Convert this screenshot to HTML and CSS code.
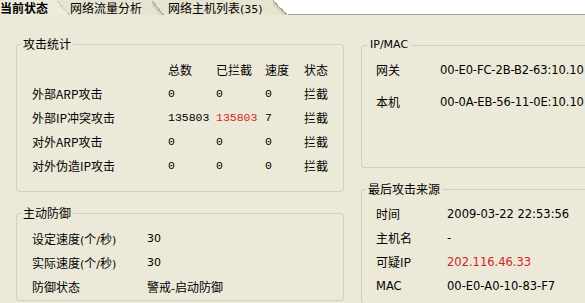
FILE: index.html
```html
<!DOCTYPE html>
<html lang="zh-CN">
<head>
<meta charset="utf-8">
<title>当前状态</title>
<link rel="stylesheet" href="styles.css">
</head>
<body>
<div class="tabs">
  <div class="tab tab-active t1"><span class="tab-label">当前状态</span><span class="tab-corner"></span></div>
  <div class="tab t2"><span class="tab-label">网络流量分析</span><span class="tab-corner"></span></div>
  <div class="tab t3"><span class="tab-label">网络主机列表<span class="lat">(35)</span></span><span class="tab-corner"></span></div>
  <div class="tab-fill"></div>
</div>
<div class="panel">
  <div class="col col-left">
    <fieldset class="group g-stats">
      <legend>攻击统计</legend>
      <div class="stats">
        <span></span><span>总数</span><span>已拦截</span><span>速度</span><span>状态</span>
        <span>外部ARP攻击</span><span class="mono">0</span><span class="mono">0</span><span class="mono">0</span><span>拦截</span>
        <span>外部IP冲突攻击</span><span class="mono">135803</span><span class="mono red">135803</span><span class="mono">7</span><span>拦截</span>
        <span>对外ARP攻击</span><span class="mono">0</span><span class="mono">0</span><span class="mono">0</span><span>拦截</span>
        <span>对外伪造IP攻击</span><span class="mono">0</span><span class="mono">0</span><span class="mono">0</span><span>拦截</span>
      </div>
    </fieldset>
    <fieldset class="group g-defense">
      <legend>主动防御</legend>
      <div class="defense">
        <span>设定速度<span class="lat">(</span>个<span class="lat">/</span>秒<span class="lat">)</span></span><span class="lat">30</span>
        <span>实际速度<span class="lat">(</span>个<span class="lat">/</span>秒<span class="lat">)</span></span><span class="lat">30</span>
        <span>防御状态</span><span>警戒<span class="lat">-</span>启动防御</span>
      </div>
    </fieldset>
  </div>
  <div class="col col-right">
    <fieldset class="group g-ipmac">
      <legend class="legend-lat">IP/MAC</legend>
      <div class="ipmac">
        <span>网关</span><span class="val val-tight">00-E0-FC-2B-B2-63:10.10</span>
        <span>本机</span><span class="val val-tight">00-0A-EB-56-11-0E:10.10</span>
      </div>
    </fieldset>
    <fieldset class="group g-last">
      <legend>最后攻击来源</legend>
      <div class="last">
        <span>时间</span><span class="val">2009-03-22 22:53:56</span>
        <span>主机名</span><span class="val">-</span>
        <span>可疑IP</span><span class="val red">202.116.46.33</span>
        <span class="val">MAC</span><span class="val">00-E0-A0-10-83-F7</span>
      </div>
    </fieldset>
  </div>
</div>
</body>
</html>
```

FILE: styles.css
```css
html, body {
  margin: 0;
  padding: 0;
}
body {
  width: 585px;
  height: 303px;
  overflow: hidden;
  background: #ffffff;
  color: #000000;
  font-family: "Noto Sans CJK SC", sans-serif;
  font-size: 12px;
}

.lat {
  font-family: "DejaVu Sans", "Noto Sans CJK SC", sans-serif;
  font-size: 11px;
}

/* tabs */
.tabs {
  display: flex;
  height: 15px;
  background: #ffffff;
}
.tab {
  display: flex;
  height: 15px;
  position: relative;
}
.tab-label {
  box-sizing: border-box;
  height: 15px;
  line-height: 15px;
  white-space: nowrap;
  background: #E7E4D1;
}
.tab-corner {
  height: 15px;
  background: linear-gradient(to top right, #E7E4D1 calc(50% - 5px), #CBC7AF calc(50% - 1px), #A7A38C calc(50% - 1px), #A7A38C 50%, transparent 50%);
}
.tab-active .tab-label {
  background: #EEEBDD;
  font-weight: bold;
}
.tab-active .tab-corner {
  background: linear-gradient(to top right, #EEEBDD calc(50% - 1px), #C9C5B0 calc(50% - 1px), #C9C5B0 50%, transparent 50%);
}
.t1 { z-index: 3; }
.t1 .tab-label { width: 57px; padding-left: 0; }
.t1 .tab-corner { width: 13px; }
.t2 { z-index: 2; margin-left: -13px; }
.t2 .tab-label { width: 95px; padding-left: 13px; }
.t2 .tab-corner { width: 12px; }
.t3 { z-index: 1; margin-left: -12px; }
.t3 .tab-label { width: 121px; padding-left: 16px; }
.t3 .tab-corner { width: 15px; }
.tab-fill {
  flex: 1;
  height: 14px;
  border-bottom: 1px solid #A3A396;
}

/* panel */
.panel {
  height: 288px;
  background: #ECE9D8;
  display: grid;
  grid-template-columns: 328px 260px;
  column-gap: 17px;
  align-items: start;
  padding: 23px 0 0 16px;
  box-sizing: border-box;
}
.col {
  display: flex;
  flex-direction: column;
  gap: 15px;
}
.col-right {
  padding-top: 1px;
}

.group {
  margin: 0;
  padding: 0;
  min-width: 0;
  border: 1px solid #D0D0BF;
  border-radius: 3px;
}
.group legend {
  margin-left: 4px;
  padding: 0 2px;
  line-height: 12px;
  font-size: 12px;
}
.group .legend-lat {
  margin-left: 5px;
  padding: 0 3px;
  font-family: "DejaVu Sans", sans-serif;
  font-size: 11px;
}

.stats {
  display: grid;
  grid-template-columns: 136px 48px 49px 39px auto;
  grid-auto-rows: 24px;
  line-height: 24px;
  padding: 8px 0 13px 15px;
  white-space: nowrap;
}
.mono {
  font-family: "Liberation Mono", monospace;
  font-size: 11.5px;
}
.red {
  color: #D02424;
}

.defense {
  display: grid;
  grid-template-columns: 115px auto;
  grid-auto-rows: 24px;
  line-height: 24px;
  padding: 8px 0 1px 15px;
  white-space: nowrap;
}

.ipmac {
  display: grid;
  grid-template-columns: 64px auto;
  grid-auto-rows: 24px;
  row-gap: 8px;
  line-height: 24px;
  padding: 7px 0 53px 14px;
  white-space: nowrap;
}
.last {
  display: grid;
  grid-template-columns: 71px auto;
  grid-auto-rows: 24px;
  line-height: 24px;
  padding: 7px 0 5px 14px;
  white-space: nowrap;
}
.val {
  font-family: "DejaVu Sans", sans-serif;
  font-size: 11.5px;
}
.val-tight {
  letter-spacing: -0.1px;
}
```
